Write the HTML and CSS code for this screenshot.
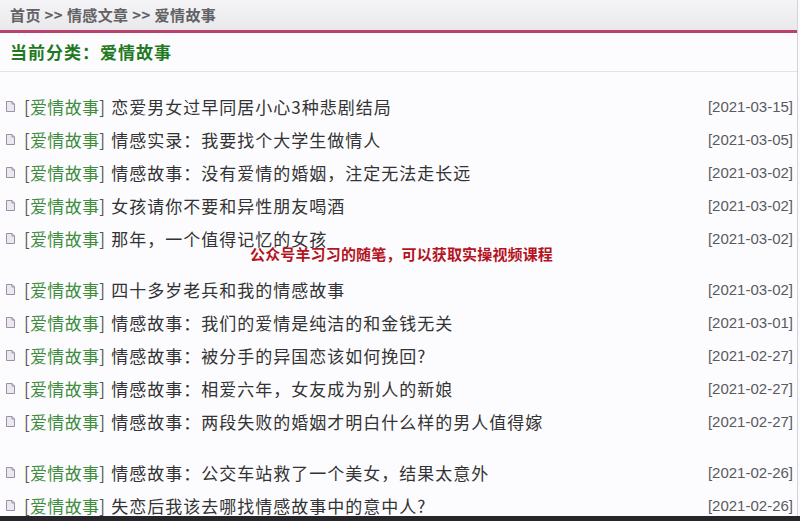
FILE: index.html
```html
<!DOCTYPE html>
<html lang="zh">
<head>
<meta charset="utf-8">
<link rel="stylesheet" href="styles.css">
</head>
<body>
<div class="page">
  <div class="crumb">首页 &gt;&gt; 情感文章 &gt;&gt; 爱情故事</div>
  <div class="cat">当前分类：爱情故事</div>
  <div class="list">
    <ul class="group">
      <li><span class="ico"><svg width="9" height="11" viewBox="0 0 9 11"><path d="M0.5 0.5H6L8.5 3V10.5H0.5Z" fill="#ece8ef" stroke="#9c8fa6"/><path d="M6 0.5V3H8.5" fill="none" stroke="#9c8fa6"/></svg></span><span class="tag">[<em>爱情故事</em>]</span><span class="title">恋爱男女过早同居小心3种悲剧结局</span><span class="date">[2021-03-15]</span></li>
      <li><span class="ico"><svg width="9" height="11" viewBox="0 0 9 11"><path d="M0.5 0.5H6L8.5 3V10.5H0.5Z" fill="#ece8ef" stroke="#9c8fa6"/><path d="M6 0.5V3H8.5" fill="none" stroke="#9c8fa6"/></svg></span><span class="tag">[<em>爱情故事</em>]</span><span class="title">情感实录：我要找个大学生做情人</span><span class="date">[2021-03-05]</span></li>
      <li><span class="ico"><svg width="9" height="11" viewBox="0 0 9 11"><path d="M0.5 0.5H6L8.5 3V10.5H0.5Z" fill="#ece8ef" stroke="#9c8fa6"/><path d="M6 0.5V3H8.5" fill="none" stroke="#9c8fa6"/></svg></span><span class="tag">[<em>爱情故事</em>]</span><span class="title">情感故事：没有爱情的婚姻，注定无法走长远</span><span class="date">[2021-03-02]</span></li>
      <li><span class="ico"><svg width="9" height="11" viewBox="0 0 9 11"><path d="M0.5 0.5H6L8.5 3V10.5H0.5Z" fill="#ece8ef" stroke="#9c8fa6"/><path d="M6 0.5V3H8.5" fill="none" stroke="#9c8fa6"/></svg></span><span class="tag">[<em>爱情故事</em>]</span><span class="title">女孩请你不要和异性朋友喝酒</span><span class="date">[2021-03-02]</span></li>
      <li><span class="ico"><svg width="9" height="11" viewBox="0 0 9 11"><path d="M0.5 0.5H6L8.5 3V10.5H0.5Z" fill="#ece8ef" stroke="#9c8fa6"/><path d="M6 0.5V3H8.5" fill="none" stroke="#9c8fa6"/></svg></span><span class="tag">[<em>爱情故事</em>]</span><span class="title">那年，一个值得记忆的女孩</span><span class="date">[2021-03-02]</span></li>
    </ul>
    <ul class="group">
      <li><span class="ico"><svg width="9" height="11" viewBox="0 0 9 11"><path d="M0.5 0.5H6L8.5 3V10.5H0.5Z" fill="#ece8ef" stroke="#9c8fa6"/><path d="M6 0.5V3H8.5" fill="none" stroke="#9c8fa6"/></svg></span><span class="tag">[<em>爱情故事</em>]</span><span class="title">四十多岁老兵和我的情感故事</span><span class="date">[2021-03-02]</span></li>
      <li><span class="ico"><svg width="9" height="11" viewBox="0 0 9 11"><path d="M0.5 0.5H6L8.5 3V10.5H0.5Z" fill="#ece8ef" stroke="#9c8fa6"/><path d="M6 0.5V3H8.5" fill="none" stroke="#9c8fa6"/></svg></span><span class="tag">[<em>爱情故事</em>]</span><span class="title">情感故事：我们的爱情是纯洁的和金钱无关</span><span class="date">[2021-03-01]</span></li>
      <li><span class="ico"><svg width="9" height="11" viewBox="0 0 9 11"><path d="M0.5 0.5H6L8.5 3V10.5H0.5Z" fill="#ece8ef" stroke="#9c8fa6"/><path d="M6 0.5V3H8.5" fill="none" stroke="#9c8fa6"/></svg></span><span class="tag">[<em>爱情故事</em>]</span><span class="title">情感故事：被分手的异国恋该如何挽回?</span><span class="date">[2021-02-27]</span></li>
      <li><span class="ico"><svg width="9" height="11" viewBox="0 0 9 11"><path d="M0.5 0.5H6L8.5 3V10.5H0.5Z" fill="#ece8ef" stroke="#9c8fa6"/><path d="M6 0.5V3H8.5" fill="none" stroke="#9c8fa6"/></svg></span><span class="tag">[<em>爱情故事</em>]</span><span class="title">情感故事：相爱六年，女友成为别人的新娘</span><span class="date">[2021-02-27]</span></li>
      <li><span class="ico"><svg width="9" height="11" viewBox="0 0 9 11"><path d="M0.5 0.5H6L8.5 3V10.5H0.5Z" fill="#ece8ef" stroke="#9c8fa6"/><path d="M6 0.5V3H8.5" fill="none" stroke="#9c8fa6"/></svg></span><span class="tag">[<em>爱情故事</em>]</span><span class="title">情感故事：两段失败的婚姻才明白什么样的男人值得嫁</span><span class="date">[2021-02-27]</span></li>
    </ul>
    <ul class="group">
      <li><span class="ico"><svg width="9" height="11" viewBox="0 0 9 11"><path d="M0.5 0.5H6L8.5 3V10.5H0.5Z" fill="#ece8ef" stroke="#9c8fa6"/><path d="M6 0.5V3H8.5" fill="none" stroke="#9c8fa6"/></svg></span><span class="tag">[<em>爱情故事</em>]</span><span class="title">情感故事：公交车站救了一个美女，结果太意外</span><span class="date">[2021-02-26]</span></li>
      <li><span class="ico"><svg width="9" height="11" viewBox="0 0 9 11"><path d="M0.5 0.5H6L8.5 3V10.5H0.5Z" fill="#ece8ef" stroke="#9c8fa6"/><path d="M6 0.5V3H8.5" fill="none" stroke="#9c8fa6"/></svg></span><span class="tag">[<em>爱情故事</em>]</span><span class="title">失恋后我该去哪找情感故事中的意中人?</span><span class="date">[2021-02-26]</span></li>
    </ul>
  </div>
  <div class="watermark">公众号羊习习的随笔，可以获取实操视频课程</div>
</div>
<div class="bottombar"></div>
</body>
</html>
```

FILE: styles.css
```css
html, body {
  margin: 0;
  padding: 0;
  background: #fbfbfd;
  overflow: hidden;
}
body {
  width: 800px;
  height: 521px;
  position: relative;
  font-family: "Noto Sans CJK SC", "Liberation Sans", sans-serif;
}
.page {
  width: 797px;
  height: 516px;
  border-right: 1px solid #d4d4d8;
  background: #fcfcfe;
  position: relative;
  overflow: hidden;
}
.crumb {
  height: 30px;
  line-height: 30px;
  padding-left: 10px;
  font-size: 15px;
  letter-spacing: 0.4px;
  font-weight: bold;
  color: #626266;
  background: linear-gradient(#f5f5f7, #e9e9eb);
  border-bottom: 3px solid #b9416d;
}
.cat {
  height: 38px;
  line-height: 38px;
  padding-left: 10px;
  font-size: 17px;
  letter-spacing: 1px;
  font-weight: bold;
  color: #1f7a1f;
  border-bottom: 1px solid #e3e3e6;
}
.list {
  padding-top: 18px;
}
.group {
  list-style: none;
  margin: 0 0 18px 0;
  padding: 0;
}
.group li {
  display: flex;
  align-items: center;
  height: 33px;
  line-height: 20px;
  font-size: 17px;
  color: #333;
}
.ico {
  width: 9px;
  height: 11px;
  margin-left: 6px;
  margin-right: 9px;
  display: flex;
}
.tag {
  color: #555;
  margin-right: 6px;
  letter-spacing: 0.3px;
}
.tag em {
  font-style: normal;
  color: #3f8c3f;
}
.title {
  flex: 1;
  color: #333;
  letter-spacing: 1px;
}
.date {
  font-family: "Liberation Sans", Arial, sans-serif;
  font-size: 15px;
  color: #5a5a5e;
  margin-right: 4px;
}
.watermark {
  position: absolute;
  left: 250px;
  top: 245px;
  font-size: 15px;
  line-height: 18px;
  letter-spacing: 0.15px;
  font-weight: bold;
  color: #b3141e;
  white-space: nowrap;
}
.bottombar {
  height: 5px;
  background: #26262a;
}
```
